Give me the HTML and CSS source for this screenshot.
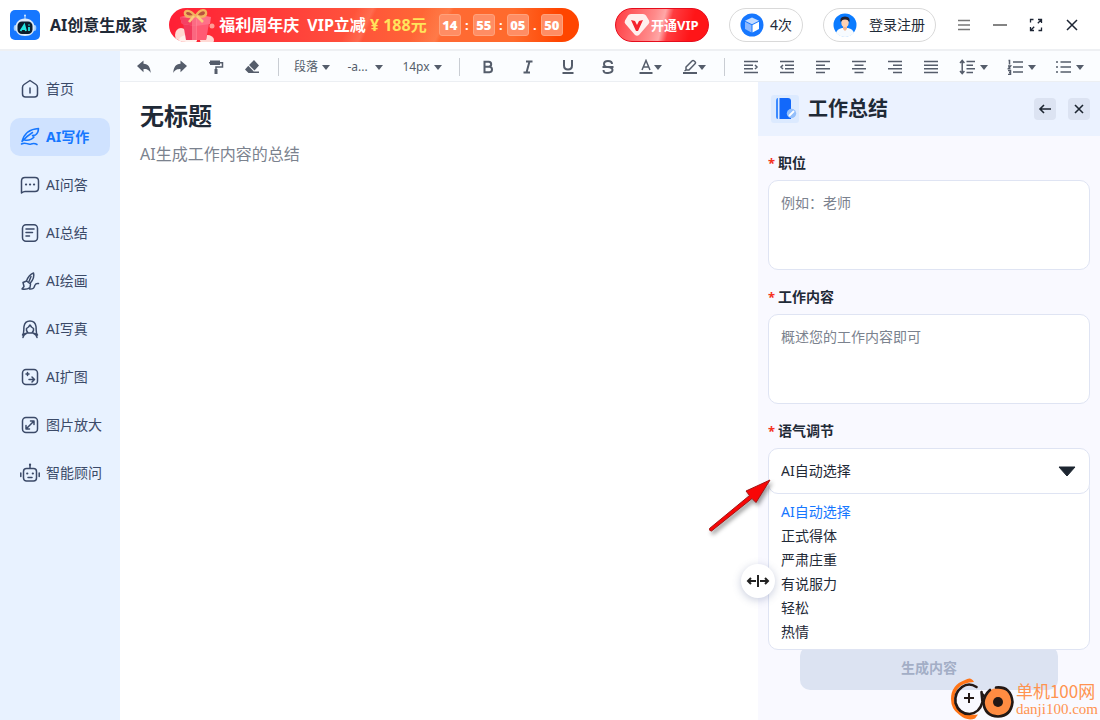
FILE: index.html
```html
<!DOCTYPE html>
<html lang="zh-CN">
<head>
<meta charset="utf-8">
<title>AI创意生成家</title>
<link rel="stylesheet" href="styles.css">
</head>
<body>
<header class="topbar">
  <div class="brand">
    <svg class="brand-logo" viewBox="0 0 30 30" aria-hidden="true">
      <rect width="30" height="30" rx="5" fill="#1677ff"/>
      <path d="M15 6v5" stroke="#bfe0ff" stroke-width="1"/><circle cx="15" cy="5.500" r="1" fill="#d7ecff"/>
      <ellipse cx="5.500" cy="18" rx="1.800" ry="3" fill="#9dccff"/><ellipse cx="24.500" cy="18" rx="1.800" ry="3" fill="#9dccff"/>
      <path d="M15 8.500c6 0 9.500 4 9.500 9s-3.500 8.500-9.500 8.500-9.500-3.500-9.500-8.500 3.500-9 9.500-9z" fill="#dcebfa"/>
      <rect x="7.500" y="11.500" width="15" height="12.500" rx="4.500" fill="#0a1d2e"/>
      <path d="M10.500 21l3.800-6 1.700 6M12.500 19h3M19 17v4M19 14.500v1" stroke="#22e5e0" stroke-width="1.800" fill="none"/>
    </svg>
    <h1 class="brand-name">AI创意生成家</h1>
  </div>
  <a class="promo" href="#">
    <svg class="promo-gift" viewBox="0 0 44 34" aria-hidden="true">
      <ellipse cx="6" cy="27" rx="6" ry="7" fill="#ffd9d3"/><ellipse cx="13" cy="32" rx="9" ry="5" fill="#fff0ec"/>
      <ellipse cx="32" cy="32" rx="7" ry="5" fill="#ffd9d4"/><circle cx="37" cy="18" r="2.500" fill="#ff9d96"/>
      <path d="M8 15h26l-3 17H11z" fill="#f2395b"/><path d="M21 16l13-1-3 17H21z" fill="#ff5b74"/>
      <path d="M5 9l16-3 15 3-1 7-14 2-14-2z" fill="#ff7188"/><path d="M5 9l16 2v7L7 16z" fill="#f54263"/>
      <path d="M17 11h5v21h-5z" fill="#ff879a" opacity=".6"/>
      <path d="M20 8C15 1 9 2 10 6c1 3 6 3 10 2zM21 8c4-8 11-7 10-2-1 3-6 3-10 2z" fill="#b8503f" stroke="#f2b35e" stroke-width="2.400"/>
      <path d="M19 8l-5 6M22 8l6 6" stroke="#f9ca7d" stroke-width="2.600"/>
    </svg>
    <span class="promo-text">福利周年庆</span>
    <span class="promo-text promo-vip">VIP立减</span>
    <span class="promo-price">¥ 188元</span>
    <span class="countdown"><b>14</b><i>:</i><b>55</b><i>:</i><b>05</b><i>.</i><b>50</b></span>
  </a>
  <div class="account">
    <button class="vip-btn" type="button">
      <svg class="vip-gem" viewBox="0 0 26 24" aria-hidden="true"><path d="M7 1h12q2 0 3 1.500l3 5q1 2-.5 3.500L15 22q-2 1.500-4 0L1.500 11Q0 9.500 1 7.500l3-5Q5 1 7 1z" fill="#fff0ee"/><path d="M7 7l4 1 2 4 2-4 4-1-5 11h-2z" fill="#f5222d"/></svg>
      <span>开通VIP</span>
    </button>
    <button class="pill pill-count" type="button">
      <svg class="pill-icon" viewBox="0 0 24 24" aria-hidden="true"><circle cx="12" cy="12" r="11.500" fill="#1677ff"/><path d="M12 4.500l7 3.300-7 3.500-7-3.500z" fill="#c5dcff"/><path d="M5 8.800l6.500 3.200v7.500L5 16z" fill="#8db9ff"/><path d="M19 8.800L12.500 12v7.500L19 16z" fill="#fff"/></svg>
      <span>4次</span>
    </button>
    <button class="pill pill-login" type="button">
      <svg class="pill-icon" viewBox="0 0 24 24" aria-hidden="true"><circle cx="12" cy="12" r="11.500" fill="#0b7bff"/><path d="M3 20q1-4 6-5h6q5 1 6 5-4 4-9 4t-9-4z" fill="#f7fbff"/><path d="M10 12h4v4l-2 2-2-2z" fill="#f2b694"/><ellipse cx="12" cy="9.500" rx="3.700" ry="4.500" fill="#ffd0b1"/><path d="M7.800 9.500Q6 3.500 12 3.500t4.200 6Q15.500 6.500 12 6.500t-4.200 3z" fill="#24202e"/></svg>
      <span>登录注册</span>
    </button>
  </div>
  <div class="window-controls">
    <button type="button" aria-label="菜单"><svg viewBox="0 0 16 16"><path d="M2 3.500h12M2 8h12M2 12.500h12" stroke="#777" stroke-width="1.300"/></svg></button>
    <button type="button" aria-label="最小化"><svg viewBox="0 0 16 16"><path d="M1 8h14" stroke="#777" stroke-width="1.800"/></svg></button>
    <button type="button" aria-label="全屏"><svg viewBox="0 0 16 16"><path d="M2.500 5.500v-3h3M10 2.500h3.500V6M9.800 6.200l3.700-3.700M13.500 10.500v3h-3M6 13.500H2.500V10M6.200 9.800l-3.700 3.700" fill="none" stroke="#1d2534" stroke-width="1.300"/></svg></button>
    <button type="button" aria-label="关闭"><svg viewBox="0 0 16 16"><path d="M3 3l10 10M13 3L3 13" stroke="#1d2534" stroke-width="1.500"/></svg></button>
  </div>
</header>

<div class="workspace">
  <nav class="sidebar">
    <a class="nav-item" href="#"><svg viewBox="0 0 20 20"><path d="M10 1.500l6 4q1.500 1 1.500 3V15q0 3-3 3h-9q-3 0-3-3V8.500q0-2 1.500-3z"/><path d="M10 9v5"/></svg><span>首页</span></a>
    <a class="nav-item is-active" href="#"><svg viewBox="0 0 20 20"><path d="M2 14.500C4 7 10 2 18.500 1.500c0 3-1 5-3 6.500l-3 .5 1.500 1.500c-2.500 3-6 3.500-9.500 3M2 14.500C5 11 8.500 8 12.500 5.500M1.500 17c4-2.500 6 1 9.500 0 2.500-.8 4-.7 6 .5"/></svg><span>AI写作</span></a>
    <a class="nav-item" href="#"><svg viewBox="0 0 20 20"><path d="M1.500 18V6q0-3.500 3.500-3.500h10q3.500 0 3.500 3.500v7q0 3.500-3.500 3.500H5q-1.500 0-3.500 1.500z"/><path d="M6 9.500h.1M10 9.500h.1M14 9.500h.1" class="heavy"/></svg><span>AI问答</span></a>
    <a class="nav-item" href="#"><svg viewBox="0 0 20 20"><rect x="2.500" y="1.700" width="15" height="16.500" rx="3.500"/><path d="M6 6h8M6 9.500h6.500M6 13h3.500"/></svg><span>AI总结</span></a>
    <a class="nav-item" href="#"><svg viewBox="0 0 20 20"><path d="M6.500 10c1.500-4 4-7 7-8 1 3-.5 7-3.500 10.500M6.500 10l4 3M11 5.500l-2 5M3 11.500l3.500-1.500 4 3-.5 3.500q-3.500 2.500-8 1.500l2-2.500zM9.500 18c5 .5 4.500-2 5.500-4 .7-1.500 2-1.800 3.500-1.500"/></svg><span>AI绘画</span></a>
    <a class="nav-item" href="#"><svg viewBox="0 0 20 20"><path d="M5.500 14.500l-3 1.500c2-2 1-5 1.500-8.500C4.500 4 6.500 2 10 2s5.500 2 6 5.500c.5 3.500-.5 6.500 1.500 8.500l-3-1.500M3 18.500c.5-3 2-3.500 4-4.500M17 18.500c-.5-3-2-3.500-4-4.500"/><path d="M10 6l1.500 2 2 1.500v2L12 14H8l-1.500-2.500v-2l2-1.500z"/></svg><span>AI写真</span></a>
    <a class="nav-item" href="#"><svg viewBox="0 0 20 20"><rect x="2.500" y="2.500" width="15" height="15" rx="3.500"/><path d="M7.500 5.500v3M6 7h3M9 12.500h5M12 10l2.500 2.500L12 15"/></svg><span>AI扩图</span></a>
    <a class="nav-item" href="#"><svg viewBox="0 0 20 20"><rect x="2.500" y="2.500" width="15" height="15" rx="3.500"/><path d="M6.500 13.500l7-7M10.500 6H14v3.500M6 10.500V14h3.500"/></svg><span>图片放大</span></a>
    <a class="nav-item" href="#"><svg viewBox="0 0 20 20"><rect x="3.500" y="5.500" width="13" height="12.500" rx="3"/><path d="M10 5V2M.8 10v3.500M19.200 10v3.500M8 14.500h4"/><path d="M7.200 10.500h.1M12.800 10.500h.1M10 1.700h.1" class="heavy"/></svg><span>智能顾问</span></a>
  </nav>

  <div class="content">
    <div class="toolbar" role="toolbar" aria-label="文本格式">
      <button class="tool" type="button" aria-label="撤销"><svg viewBox="0 0 16 16"><path class="solid" d="M1 7l6.500-5.500v3.300c5 .4 6.800 3.500 7.300 9.200-2-3.500-4-4-7.300-4v3.200z"/></svg></button>
      <button class="tool" type="button" aria-label="重做"><svg viewBox="0 0 16 16"><path class="solid" d="M15 7L8.500 1.500v3.300C3.500 5.200 1.700 8.300 1.200 14c2-3.500 4-4 7.300-4v3.200z"/></svg></button>
      <button class="tool" type="button" aria-label="格式刷"><svg viewBox="0 0 16 16"><path class="solid" d="M2 1.500h10v4.500H2z"/><path d="M1 3.700h13.500V8H8v3"/><path class="solid" d="M6.500 10h3v5h-3z"/></svg></button>
      <button class="tool" type="button" aria-label="清除格式"><svg viewBox="0 0 16 16"><path class="solid" d="M10 1l5 5.500-4.500 5L5 6zM4.300 6.800l5.300 5.500L8 14H4.500L1 10.500zM7 12.500h8V14H6z"/></svg></button>
      <span class="divider"></span>
      <button class="tool tool-text" type="button">段落<i class="caret"></i></button>
      <button class="tool tool-text tool-font" type="button">-a...<i class="caret"></i></button>
      <button class="tool tool-text tool-size" type="button">14px<i class="caret"></i></button>
      <span class="divider"></span>
      <button class="tool tool-wide" type="button" aria-label="加粗"><svg viewBox="0 0 16 16"><path class="bold" d="M4.500 2.800h4.200q2.500.2 2.500 2.500T8.700 7.800H4.500zM4.500 7.800h5q2.500.2 2.500 2.700t-2.500 2.700h-5z"/></svg></button>
      <button class="tool tool-wide" type="button" aria-label="斜体"><svg viewBox="0 0 16 16"><path class="bold" d="M6 2.500h6.500M3.500 13.500H10M9.500 2.500l-3 11"/></svg></button>
      <button class="tool tool-wide" type="button" aria-label="下划线"><svg viewBox="0 0 16 16"><path class="bold" d="M4 1v5.500q0 4 4 4t4-4V1M2.500 14h11"/></svg></button>
      <button class="tool tool-wide" type="button" aria-label="删除线"><svg viewBox="0 0 16 16"><path class="bold" d="M12 5Q12 2 8 2T4 5t4 3q4.500.5 4.500 3T8 14t-4.500-3M2.500 8h11"/></svg></button>
      <button class="tool tool-drop" type="button" aria-label="文字颜色"><svg viewBox="0 0 16 16"><path d="M4 11L8 1.500 12 11M5.500 8h5"/><path class="bold" d="M1.500 14h13"/></svg><i class="caret"></i></button>
      <button class="tool tool-drop" type="button" aria-label="背景色"><svg viewBox="0 0 16 16"><path d="M4 11V8l6-6q1-1 2.200 0l.8.800q1 1 0 2L7 11zM4 11l-1.500 1"/><path class="bold" d="M1 14h14"/></svg><i class="caret"></i></button>
      <span class="divider"></span>
      <button class="tool" type="button" aria-label="增加缩进"><svg viewBox="0 0 16 16"><path d="M1 2.500h14M1 6.200h9M1 9.800h9M1 13.500h14M12 6l2 2-2 2"/></svg></button>
      <button class="tool" type="button" aria-label="减少缩进"><svg viewBox="0 0 16 16"><path d="M1 2.500h14M6 6.200h9M6 9.800h9M1 13.500h14M4 6L2 8l2 2"/></svg></button>
      <button class="tool" type="button" aria-label="左对齐"><svg viewBox="0 0 16 16"><path d="M1 2.500h14M1 6.200h9M1 9.800h14M1 13.500h9"/></svg></button>
      <button class="tool" type="button" aria-label="居中"><svg viewBox="0 0 16 16"><path d="M1 2.500h14M3.500 6.200h9M1 9.800h14M3.500 13.500h9"/></svg></button>
      <button class="tool" type="button" aria-label="右对齐"><svg viewBox="0 0 16 16"><path d="M1 2.500h14M6 6.200h9M1 9.800h14M6 13.500h9"/></svg></button>
      <button class="tool" type="button" aria-label="两端对齐"><svg viewBox="0 0 16 16"><path d="M1 2.500h14M1 6.200h14M1 9.800h14M1 13.500h14"/></svg></button>
      <button class="tool tool-list" type="button" aria-label="行高"><svg viewBox="0 0 16 16"><path d="M3.200 2v12M1 4l2.200-2.500L5.400 4M1 12l2.200 2.500L5.400 12M7.500 2.500H16M7.500 6.200H14M7.500 9.800H16M7.500 13.500H14"/></svg><i class="caret"></i></button>
      <button class="tool tool-list" type="button" aria-label="有序列表"><svg viewBox="0 0 16 16"><path d="M6 3h10M6 8h10M6 13h10M1.500 1.500h1v4M1 7h2.500L1.500 9.500h2M1 11.500h2.500v4H1M2 13.500h1.500"/></svg><i class="caret"></i></button>
      <button class="tool tool-list" type="button" aria-label="无序列表"><svg viewBox="0 0 16 16"><path d="M5.500 3H16M5.500 8H16M5.500 13H16M1 3h2M1 8h2M1 13h2"/></svg><i class="caret"></i></button>
    </div>

    <div class="split">
      <main class="editor">
        <h2 class="doc-title">无标题</h2>
        <p class="doc-text">AI生成工作内容的总结</p>
      </main>

      <aside class="panel">
        <div class="panel-head">
          <svg class="panel-icon" viewBox="0 0 28 28" aria-hidden="true"><rect width="28" height="28" rx="3" fill="#dceaff"/><path d="M5 6q0-3 2-3v21q-2 0-2-2z" fill="#3d8bff"/><path d="M8.500 3H17q3 0 3 3v18H8.500z" fill="#1268fa"/><circle cx="20.500" cy="18.500" r="4.700" fill="#94bffb"/><path d="M18.500 20.500l4-4" stroke="#fff" stroke-width="1.800" stroke-linecap="round"/></svg>
          <h2 class="panel-title">工作总结</h2>
          <button class="square-btn" type="button" aria-label="返回"><svg viewBox="0 0 16 16"><path d="M14 8H3M7 4L3 8l4 4"/></svg></button>
          <button class="square-btn" type="button" aria-label="关闭面板"><svg viewBox="0 0 16 16"><path d="M4 4l8 8M12 4l-8 8"/></svg></button>
        </div>
        <form class="panel-form">
          <div class="field">
            <label for="job"><span class="required">*</span>职位</label>
            <textarea id="job" placeholder="例如：老师"></textarea>
          </div>
          <div class="field">
            <label for="work"><span class="required">*</span>工作内容</label>
            <textarea id="work" placeholder="概述您的工作内容即可"></textarea>
          </div>
          <div class="field">
            <label for="tone"><span class="required">*</span>语气调节</label>
            <div class="select-wrap">
              <select id="tone"><option>AI自动选择</option></select>
              <svg class="select-arrow" viewBox="0 0 18 11" aria-hidden="true"><path d="M1 1h16L9 10z"/></svg>
              <ul class="options" role="listbox">
                <li class="is-selected" role="option">AI自动选择</li>
                <li role="option">正式得体</li>
                <li role="option">严肃庄重</li>
                <li role="option">有说服力</li>
                <li role="option">轻松</li>
                <li role="option">热情</li>
              </ul>
            </div>
          </div>
          <button class="generate" type="button">生成内容</button>
        </form>
        <button class="resize-handle" type="button" aria-label="调整宽度"><svg viewBox="0 0 24 16"><path d="M12 2v12M10 8H2M5 5L2 8l3 3M14 8h8M19 5l3 3-3 3"/></svg></button>
        <svg class="pointer-arrow" viewBox="0 0 70 60" aria-hidden="true"><path d="M5.500 52.500L45.500 19.500 42 15 66 4 52 26.500 48 22.500 7.500 55q-2.500 0-2-2.500z"/></svg>
      </aside>
    </div>
  </div>
</div>

<div class="watermark">
  <svg class="watermark-logo" viewBox="0 0 64 42" aria-hidden="true">
    <path d="M24 4Q21-2 15 2 1 7 1 21q0 10 8 15.500 8 7 16 4l3-4q-6 1-12-1Q4 31 4 20 6 9 14 6q5-2 10-2z" fill="#ff7417"/>
    <path d="M26.500 9Q19 4 12 9 4 15 5.500 25q3.500 11 14 11 10-1 13-12l-1-10M32 16l3 3 5-6" fill="none" stroke="#231815" stroke-width="2.600" stroke-linecap="round"/>
    <path d="M19 15v10M14 20h10" stroke="#231815" stroke-width="2"/>
    <circle cx="48" cy="24" r="14" fill="#ff8c42"/>
    <path d="M46 9.500Q61 8 62.500 24 61 38 48 38.500 35 38 33.500 25 34 17 40 12" fill="none" stroke="#231815" stroke-width="2.600" stroke-linecap="round"/>
    <circle cx="48" cy="24" r="5" fill="#231815"/>
  </svg>
  <div class="watermark-text"><span class="watermark-name">单机100网</span><span class="watermark-url">danji100.com</span></div>
</div>
</body>
</html>
```
FILE: styles.css
```css
* { box-sizing: border-box; }

body {
  margin: 0;
  min-height: 100vh;
  display: flex;
  flex-direction: column;
  position: relative;
  background: #fff;
  color: #1f2a37;
  font-family: "Noto Sans", "Noto Sans CJK SC", sans-serif;
  font-size: 14px;
  line-height: 20px;
}

button, select, textarea { font: inherit; color: inherit; }
button { padding: 0; border: 0; background: none; cursor: pointer; }
a { color: inherit; text-decoration: none; }
h1, h2, p, ul { margin: 0; }

/* Top bar */
.topbar {
  display: flex;
  align-items: center;
  height: 51px;
  padding: 0 10px;
  border-bottom: 2px solid #eef0f3;
}
.brand { display: flex; align-items: center; gap: 10px; }
.brand-logo { width: 30px; height: 30px; }
.brand-name { font-size: 16px; line-height: 24px; font-weight: 700; white-space: nowrap; }

.promo {
  display: flex;
  align-items: center;
  width: 410px;
  height: 34px;
  margin-left: 22px;
  padding-left: 6px;
  border-radius: 17px;
  overflow: hidden;
  color: #fff;
  font-size: 16px;
  font-weight: 700;
  white-space: nowrap;
  background: linear-gradient(115deg, transparent 44%, #ff8a7066 48%, transparent 49%, transparent 60%, #ff9a7055 66%, transparent 67%), linear-gradient(90deg, #ff1f35, #ff4a3c 38%, #ff6a35 65%, #ff6a2c 84%, #ff4500 95%);
}
.promo-gift { width: 44px; height: 34px; }
.promo-vip { margin-left: 8px; }
.promo-price { width: 73px; padding-left: 4px; color: #ffe45c; }
.countdown { display: flex; align-items: center; font-size: 13px; }
.countdown b {
  width: 22px;
  height: 22px;
  border: 1px solid #ffa27c;
  border-radius: 3px;
  background: #ff8d64;
  text-align: center;
}
.countdown i { width: 12px; font-style: normal; text-align: center; }

.account { display: flex; align-items: center; gap: 20px; margin-left: auto; white-space: nowrap; }
.vip-btn {
  display: flex;
  align-items: center;
  gap: 1px;
  width: 94px;
  height: 34px;
  padding-left: 8px;
  border: 1px solid #e60c1c;
  border-radius: 17px;
  color: #fff;
  font-size: 13px;
  font-weight: 700;
  background: linear-gradient(105deg, #ff3b41, #ff8a8a 40%, #ffa7a7 50%, #ff3c40 58%, #ff1518 80%);
}
.vip-gem { width: 26px; height: 24px; }
.pill {
  display: flex;
  align-items: center;
  height: 34px;
  border: 1px solid #d9d9d9;
  border-radius: 17px;
  background: #fff;
}
.pill-icon { width: 24px; height: 24px; }
.pill-count { width: 74px; padding-left: 10px; gap: 6px; }
.pill-login { width: 113px; padding-left: 9px; gap: 12px; }

.window-controls { display: flex; margin-left: 10px; }
.window-controls button { display: grid; place-items: center; width: 36px; height: 36px; }
.window-controls svg { width: 16px; height: 16px; }

/* Workspace */
.workspace { flex: 1; display: flex; }
.sidebar {
  display: flex;
  flex-direction: column;
  gap: 10px;
  width: 120px;
  flex-shrink: 0;
  padding: 19px 10px;
  background: #e8f2ff;
}
.nav-item {
  display: flex;
  align-items: center;
  gap: 6px;
  height: 38px;
  padding-left: 10px;
  border-radius: 10px;
  color: #3b4a68;
  white-space: nowrap;
}
.nav-item svg {
  width: 20px;
  height: 20px;
  flex-shrink: 0;
  fill: none;
  stroke: currentColor;
  stroke-width: 1.5;
  stroke-linecap: round;
  stroke-linejoin: round;
}
.nav-item .heavy { stroke-width: 2.2; }
.nav-item.is-active { background: #cfe2ff; color: #1677ff; font-weight: 700; }

.content { flex: 1; min-width: 0; display: flex; flex-direction: column; }
.toolbar {
  display: flex;
  align-items: center;
  height: 31px;
  padding: 2px 0 0 6px;
  border-bottom: 1px solid #eceff3;
  background: #fbfdff;
  color: #555d6b;
  white-space: nowrap;
}
.tool {
  display: flex;
  align-items: center;
  justify-content: center;
  width: 36px;
  height: 28px;
  flex-shrink: 0;
}
.tool svg { width: 16px; height: 16px; fill: none; stroke: currentColor; stroke-width: 1.5; }
.tool .solid { fill: currentColor; stroke: none; }
.tool .bold { stroke-width: 2; }
.tool-text { width: 50px; gap: 4px; font-size: 12px; }
.tool-font { width: 56px; gap: 7px; }
.tool-size { width: 58px; gap: 4px; }
.tool-wide { width: 40px; }
.tool-drop { width: 44px; }
.tool-list { width: 48px; gap: 5px; }
.caret { border: 4px solid transparent; border-top: 5px solid currentColor; border-bottom: 0; }
.divider { width: 1px; height: 18px; margin: 0 8px; flex-shrink: 0; background: #c9cdd3; }

.split { flex: 1; display: flex; }
.editor { flex: 1; padding: 16px 20px; }
.doc-title { font-size: 24px; line-height: 36px; font-weight: 700; }
.doc-text { margin-top: 8px; font-size: 16px; line-height: 24px; color: #7b828e; }

/* Side panel */
.panel {
  position: relative;
  display: flex;
  flex-direction: column;
  width: 342px;
  flex-shrink: 0;
  background: #f9f9ff;
}
.panel-head {
  display: flex;
  align-items: center;
  height: 54px;
  padding: 0 10px 0 13px;
  gap: 12px;
  background: #ebf2ff;
}
.panel-icon { width: 28px; height: 28px; }
.panel-title { flex: 1; margin-left: -3px; font-size: 20px; line-height: 28px; font-weight: 700; }
.square-btn {
  display: grid;
  place-items: center;
  width: 22px;
  height: 22px;
  border-radius: 4px;
  background: #dce3f2;
}
.square-btn svg { width: 16px; height: 16px; fill: none; stroke: #1c2530; stroke-width: 1.6; }

.panel-form { flex: 1; display: flex; flex-direction: column; padding: 17px 10px 30px; gap: 17px; }
.field { display: flex; flex-direction: column; gap: 7px; }
.field label { font-weight: 700; }
.required { margin-right: 3px; color: #f5321e; font-size: 13px; }
.field textarea {
  display: block;
  width: 100%;
  height: 90px;
  padding: 12px;
  border: 1px solid #dfe4f3;
  border-radius: 10px;
  background: #fff;
  resize: none;
}
.field textarea::placeholder { color: #7b828e; opacity: 1; }

.select-wrap { position: relative; z-index: 1; }
.select-wrap select {
  position: relative;
  z-index: 1;
  display: block;
  width: 100%;
  height: 46px;
  padding: 0 40px 0 12px;
  border: 1px solid #dfe4f3;
  border-radius: 10px;
  background: #fff;
  appearance: none;
}
.select-arrow { position: absolute; z-index: 2; right: 14px; top: 18px; width: 18px; height: 11px; fill: #1c2530; stroke: #1c2530; stroke-linejoin: round; }
.options {
  position: absolute;
  top: 32px;
  left: 0;
  right: 0;
  padding: 19px 12px 5px;
  border: 1px solid #dfe4f3;
  border-radius: 10px;
  background: #fff;
  list-style: none;
  line-height: 24px;
}
.options .is-selected { color: #1677ff; }

.generate {
  height: 44px;
  margin: auto 32px 0;
  border-radius: 10px;
  background: #dce3f2;
  color: #a3aec6;
  font-weight: 700;
}

.resize-handle {
  position: absolute;
  z-index: 2;
  left: -17px;
  bottom: 122px;
  display: grid;
  place-items: center;
  width: 34px;
  height: 34px;
  border-radius: 50%;
  background: #fff;
  box-shadow: 0 2px 8px #5a6a9a55;
}
.resize-handle svg { width: 24px; height: 16px; fill: none; stroke: #222; stroke-width: 2; }

.pointer-arrow {
  position: absolute;
  z-index: 3;
  left: -54px;
  top: 394px;
  width: 70px;
  height: 60px;
  fill: #f80606;
  stroke: #a31414;
  stroke-width: 1;
  filter: drop-shadow(2px 3px 2px #0006);
}

.watermark {
  position: absolute;
  z-index: 4;
  right: 2px;
  bottom: 0;
  display: flex;
  align-items: center;
  gap: 2px;
  color: #ff9350;
  white-space: nowrap;
}
.watermark-logo { width: 64px; height: 42px; }
.watermark-text { display: flex; flex-direction: column; }
.watermark-name { font-family: "Noto Sans CJK SC", sans-serif; font-size: 17px; line-height: 20px; }
.watermark-url { font-family: "Liberation Serif", serif; font-size: 15px; line-height: 16px; }
```
